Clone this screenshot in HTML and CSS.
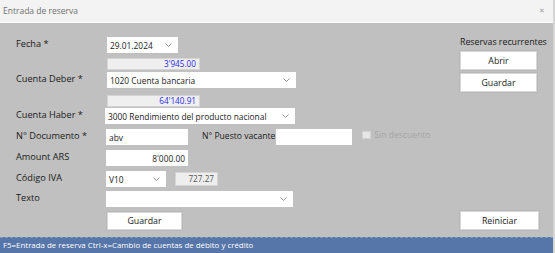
FILE: index.html
```html
<!DOCTYPE html>
<html lang="es">

<head>
    <meta charset="UTF-8">
    <meta name="viewport" content="width=device-width, initial-scale=1.0">
    <title>Entrada de reserva</title>
    <link rel="stylesheet" href="styles.css">
</head>

<body>
    <div class="window">
        <div class="titlebar">
            <span class="title">Entrada de reserva</span>
            <span class="close">&#x2715;</span>
        </div>

        <div class="content">
            <div class="form">
                <div class="row">
                    <label class="label">Fecha *</label>
                    <div class="select w-date">
                        <span>29.01.2024</span>
                        <svg class="chev" width="7" height="4" viewBox="0 0 7 4"><polyline points="0.5,0.5 3.5,3.5 6.5,0.5" /></svg>
                    </div>
                </div>

                <div class="row row-bal gap-5">
                    <div class="balance">3'945.00</div>
                </div>

                <div class="row gap-2">
                    <label class="label">Cuenta Deber *</label>
                    <div class="select w-acc">
                        <span>1020 Cuenta bancaria</span>
                        <svg class="chev" width="7" height="4" viewBox="0 0 7 4"><polyline points="0.5,0.5 3.5,3.5 6.5,0.5" /></svg>
                    </div>
                </div>

                <div class="row row-bal gap-7">
                    <div class="balance">64'140.91</div>
                </div>

                <div class="row gap-1">
                    <label class="label">Cuenta Haber *</label>
                    <div class="select w-acc shift">
                        <span>3000 Rendimiento del producto nacional</span>
                        <svg class="chev" width="7" height="4" viewBox="0 0 7 4"><polyline points="0.5,0.5 3.5,3.5 6.5,0.5" /></svg>
                    </div>
                </div>

                <div class="row gap-5">
                    <label class="label">N° Documento *</label>
                    <input class="field w-short" type="text" value="abv">
                    <label class="label-inline">N° Puesto vacante</label>
                    <input class="field w-post" type="text" value="">
                    <span class="check"></span>
                    <span class="check-text">Sin descuento</span>
                </div>

                <div class="row gap-5">
                    <label class="label">Amount ARS</label>
                    <input class="field w-short num" type="text" value="8'000.00">
                </div>

                <div class="row gap-5">
                    <label class="label">Código IVA</label>
                    <div class="select w-iva">
                        <span>V10</span>
                        <svg class="chev" width="7" height="4" viewBox="0 0 7 4"><polyline points="0.5,0.5 3.5,3.5 6.5,0.5" /></svg>
                    </div>
                    <div class="vat">727.27</div>
                </div>

                <div class="row gap-4">
                    <label class="label">Texto</label>
                    <div class="select w-text">
                        <span></span>
                        <svg class="chev" width="7" height="4" viewBox="0 0 7 4"><polyline points="0.5,0.5 3.5,3.5 6.5,0.5" /></svg>
                    </div>
                </div>

                <div class="row row-btn gap-5">
                    <button class="btn w-save">Guardar</button>
                </div>
            </div>

            <div class="side">
                <div class="side-title">Reservas recurrentes</div>
                <button class="btn w-side">Abrir</button>
                <button class="btn w-side">Guardar</button>
                <button class="btn w-reset">Reiniciar</button>
            </div>
        </div>

        <div class="status">F5=Entrada de reserva Ctrl-x=Cambio de cuentas de débito y crédito</div>
    </div>
</body>

</html>
```

FILE: styles.css
```css
* {
    margin: 0;
    padding: 0;
    box-sizing: border-box;
}

body {
    width: 555px;
    height: 253px;
    overflow: hidden;
    font-family: "Open Sans", "Noto Sans", sans-serif;
    font-size: 9px;
    color: #1a1a1a;
}

.window {
    width: 555px;
    height: 253px;
    display: flex;
    flex-direction: column;
    border-right: 2px solid #d6d6d6;
}

.titlebar {
    height: 23px;
    background-color: #f3f3f3;
    border-bottom: 1px solid #ffffff;
    display: flex;
    align-items: center;
    justify-content: space-between;
    padding: 0 8px 1px 3px;
}

.title {
    color: #707070;
    font-size: 8.5px;
}

.close {
    color: #a0a0a0;
    font-size: 7px;
}

.content {
    flex: 1;
    background-color: #c0c0c0;
    display: flex;
    padding: 0 6px 0 16px;
}

/* left form */
.form {
    padding-top: 14px;
    flex: 1;
}

.row {
    display: flex;
    align-items: center;
    height: 16px;
}

.row-bal {
    height: 12px;
    padding-left: 91px;
}

.row-btn {
    height: 18px;
    padding-left: 91px;
}

.gap-1 { margin-top: 1px; }
.gap-2 { margin-top: 2px; }
.gap-4 { margin-top: 4px; }
.gap-5 { margin-top: 5px; }
.gap-7 { margin-top: 7px; }

.label {
    width: 90px;
    flex-shrink: 0;
    font-size: 9.2px;
    line-height: 1;
    margin-top: -3px;
}

.select {
    height: 16px;
    background-color: #ffffff;
    display: flex;
    align-items: center;
    justify-content: space-between;
    padding: 0 6px 0 3px;
    font-size: 8.4px;
}

.chev {
    fill: none;
    stroke: #8a8a8a;
    stroke-width: 0.9;
}

.w-date { width: 71px; margin-left: 1px; }
.w-acc { width: 189px; margin-left: 1px; }
.shift { width: 190px; margin-left: -1px; }
.w-iva { width: 60px; }
.w-text { width: 187px; }

.balance {
    width: 93px;
    height: 12px;
    background-color: #efefef;
    border: 1px solid #d4d4d4;
    color: #2a2ae6;
    font-size: 8.2px;
    line-height: 10px;
    text-align: right;
    padding-right: 3px;
}

.field {
    height: 16px;
    border: 0;
    background-color: #ffffff;
    font-family: inherit;
    font-size: 8.4px;
    color: #1a1a1a;
    padding: 0 3px;
    outline: none;
}

.num {
    text-align: right;
}

.w-short { width: 82px; }
.w-post { width: 76px; }

.label-inline {
    font-size: 8.6px;
    margin: -3px 1px 0 14px;
}

.check {
    width: 9px;
    height: 8px;
    background-color: #e6e6e6;
    border: 1px solid #d2d2d2;
    margin: -5px 3px 0 10px;
}

.check-text {
    color: #a6a6a6;
    font-size: 8.6px;
    margin-top: -4px;
}

.vat {
    width: 43px;
    height: 14px;
    margin-left: 9px;
    background-color: #eeeeee;
    border: 1px solid #d4d4d4;
    color: #555555;
    font-size: 8.2px;
    line-height: 12px;
    text-align: right;
    padding-right: 3px;
}

.btn {
    height: 19px;
    background-color: #ffffff;
    border: 1px solid #d8d8d8;
    box-shadow: 0 0 0 1px #b8b8b8;
    font-family: inherit;
    font-size: 8.8px;
    color: #1a1a1a;
}

.w-save { width: 75px; height: 18px; }

/* right column */
.side {
    width: 87px;
    display: flex;
    flex-direction: column;
    align-items: flex-start;
    padding-top: 13px;
}

.side-title {
    font-size: 8.8px;
    white-space: nowrap;
    margin-bottom: 2px;
}

.w-side {
    width: 77px;
    margin-top: 1px;
    margin-bottom: 2px;
}

.w-reset {
    width: 79px;
    margin-top: auto;
    margin-bottom: 7px;
}

.status {
    height: 16px;
    background-color: #5675a9;
    border-top: 1px dashed #7f97c4;
    color: #ffffff;
    font-size: 7.9px;
    line-height: 14px;
    padding-left: 3px;
    white-space: nowrap;
}
```
